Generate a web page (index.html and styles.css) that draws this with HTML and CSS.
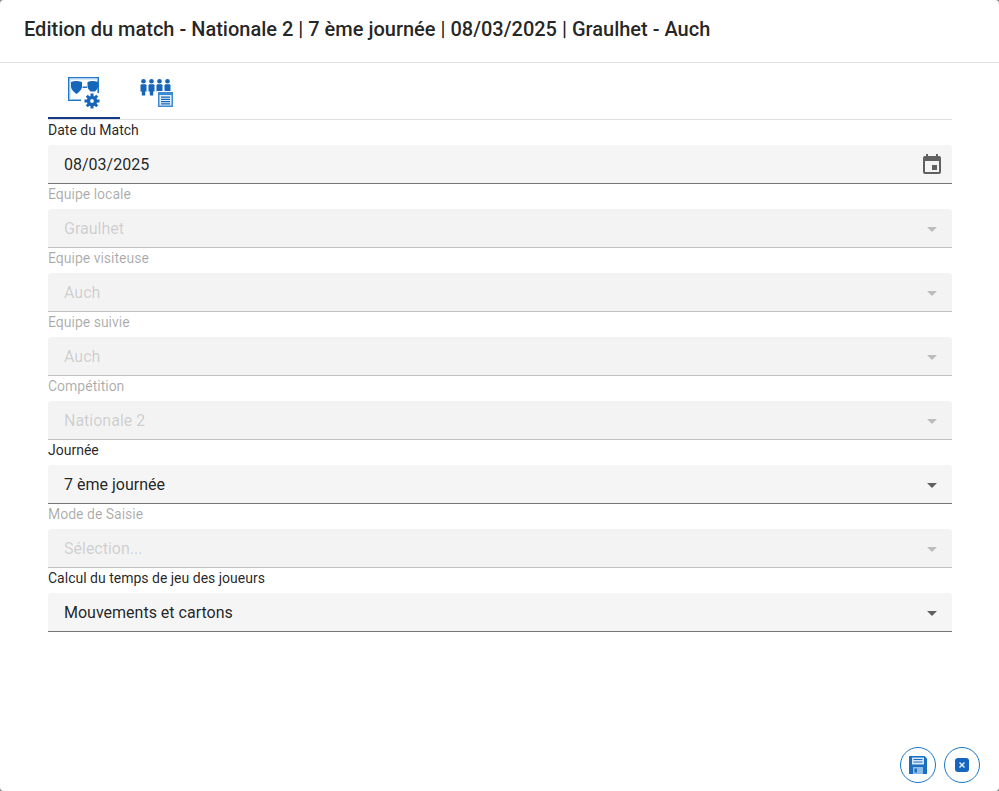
FILE: index.html
```html
<!DOCTYPE html>
<html lang="fr">
<head>
<meta charset="utf-8">
<title>Edition du match</title>
<link rel="stylesheet" href="styles.css">
</head>
<body>
<div class="dialog">
  <header class="title"><h1>Edition du match - Nationale 2 | 7 ème journée | 08/03/2025 | Graulhet - Auch</h1></header>
  <main class="content">
    <div class="tabs">
      <div class="tab active">
        <svg width="32" height="32" viewBox="0 0 32 32">
          <path fill="#1f78c8" d="M0 0h31v16h-1.600V1.600H1.600v20.800H13V24H0z"/>
          <path fill="#d5e6f6" d="M1.600 1.600h27.800v1.400H3v19.400H1.600z"/>
          <path fill="#1565b8" d="M3 5q5-2.200 11 0v5q-.5 3.500-5.500 7q-5-3.500-5.500-7zM19.500 5q5-2.200 10.500 0v5q-.5 2.500-3 4.500h-4.500q-2.500-2-3-4.500z"/>
          <rect x="14.500" y="9.500" width="4.500" height="1.500" fill="#1976c5"/>
          <g fill="#1565b8">
            <circle cx="24" cy="24" r="5.200"/>
            <path d="M22.500 16.500h3v3h-3zM22.500 28.500h3v3h-3zM16.500 22.500h3v3h-3zM28.500 22.500h3v3h-3z"/>
            <path d="M17.800 19.800l2-2 2.500 2.500-2 2zM25.700 27.700l2-2 2.500 2.500-2 2zM17.800 28.200l2.500-2.500 2 2-2.500 2.500zM25.700 20.300l2.500-2.500 2 2-2.500 2.500z"/>
          </g>
          <circle cx="24" cy="24" r="1.900" fill="#fff"/>
        </svg>
      </div>
      <div class="tab">
        <svg width="34" height="30" viewBox="0 0 34 30">
          <defs>
            <g id="p"><circle cx="3.500" cy="4.300" r="2.300"/><path d="M1.300 7.200h4.400l.8.800v6.500H5.200v4H1.800v-4H.5V8z"/></g>
          </defs>
          <g fill="#1565b8">
            <use href="#p" x="1"/><use href="#p" x="9"/><use href="#p" x="17"/><use href="#p" x="25"/>
          </g>
          <rect x="18" y="14" width="16" height="16" fill="#fff"/>
          <rect x="19" y="15" width="15" height="15" fill="#3b8ad2"/>
          <rect x="20.500" y="18" width="12" height="10.500" fill="#e3eef8"/>
          <path d="M22 19.500h9v1.300h-9zM22 21.800h9v1.300h-9zM22 24h9v1.300h-9zM22 26.200h9v1.200h-9z" fill="#1565b8"/>
        </svg>
      </div>
    </div>
    <div class="field">
      <label>Date du Match</label>
      <div class="box"><span>08/03/2025</span>
        <svg width="24" height="24" viewBox="0 0 24 24"><path fill="#616161" d="M19 4h-1V2h-2v2H8V2H6v2H5a2 2 0 0 0-2 2v14a2 2 0 0 0 2 2h14a2 2 0 0 0 2-2V6a2 2 0 0 0-2-2zm0 16H5V9h14zm-7-7h5v5h-5z"/></svg>
      </div>
    </div>
    <div class="field off"><label>Equipe locale</label><div class="box"><span>Graulhet</span><i class="arrow"></i></div></div>
    <div class="field off"><label>Equipe visiteuse</label><div class="box"><span>Auch</span><i class="arrow"></i></div></div>
    <div class="field off"><label>Equipe suivie</label><div class="box"><span>Auch</span><i class="arrow"></i></div></div>
    <div class="field off"><label>Compétition</label><div class="box"><span>Nationale 2</span><i class="arrow"></i></div></div>
    <div class="field"><label>Journée</label><div class="box"><span>7 ème journée</span><i class="arrow"></i></div></div>
    <div class="field off"><label>Mode de Saisie</label><div class="box"><span>Sélection...</span><i class="arrow"></i></div></div>
    <div class="field"><label>Calcul du temps de jeu des joueurs</label><div class="box"><span>Mouvements et cartons</span><i class="arrow"></i></div></div>
  </main>
  <footer class="actions">
    <button class="round" aria-label="Enregistrer">
      <svg width="20" height="20" viewBox="0 0 20 20">
        <path fill="#1a6fc0" d="M1 1h15.500L19 3.500V19H1z"/>
        <rect x="4" y="2.500" width="12" height="7" fill="#d6e6f6"/>
        <path fill="#1a6fc0" d="M5.500 4h9v1h-9zM5.500 6.500h9v1h-9z"/>
        <rect x="5" y="12" width="10" height="7" fill="#8fbce8"/>
        <rect x="6.500" y="13.500" width="2.500" height="4" fill="#1a6fc0"/>
      </svg>
    </button>
    <button class="round" aria-label="Fermer">
      <svg width="16" height="16" viewBox="0 0 16 16">
        <rect x="1" y="1" width="14" height="14" rx="3" fill="#1565c0"/>
        <path d="M5.500 5.500l5 5M10.500 5.500l-5 5" stroke="#dbe9f7" stroke-width="1.500"/>
      </svg>
    </button>
  </footer>
</div>
</body>
</html>
```
FILE: styles.css
```css
* { box-sizing: border-box; }
html, body { margin: 0; height: 100%; }
body { background: #8a8a8a; font-family: Roboto, "Liberation Sans", sans-serif; overflow: hidden; }
.dialog { width: 999px; height: 791px; background: #fff; border-radius: 4px; display: flex; flex-direction: column; }
.title { height: 63px; border-bottom: 1px solid #e0e0e0; padding: 0 24px; display: flex; align-items: center; flex: none; }
.title h1 { margin: 0 0 4px; font-size: 20px; font-weight: 500; line-height: 32px; color: rgba(0,0,0,.87); white-space: nowrap; }
.content { flex: 1; padding: 0 47px 0 48px; }
.tabs { display: flex; height: 57px; border-bottom: 1px solid #e0e0e0; }
.tab { width: 72px; height: 56px; display: flex; justify-content: center; align-items: flex-start; padding-top: 14px; }
.tab.active { border-bottom: 2px solid #163a8a; }
.field { height: 64px; display: flex; flex-direction: column; }
.field label { height: 25px; font-size: 14px; line-height: 21px; color: rgba(0,0,0,.87); }
.box { height: 39px; background: #f5f5f5; border-radius: 4px 4px 0 0; border-bottom: 1px solid #757575; padding: 0 8px 0 16px; display: flex; align-items: center; justify-content: space-between; font-size: 16px; color: rgba(0,0,0,.87); }
.arrow { width: 0; height: 0; border-left: 5px solid transparent; border-right: 5px solid transparent; border-top: 5px solid #616161; margin: 2px 7px 0 0; }
.off label { color: rgba(0,0,0,.34); }
.off .box { color: rgba(0,0,0,.17); border-bottom-color: #c2c2c2; background: #f3f3f3; }
.off .arrow { border-top-color: #bdbdbd; }
.actions { display: flex; justify-content: flex-end; gap: 8px; padding: 0 19px 8px 0; flex: none; }
.round { width: 36px; height: 36px; border-radius: 50%; background: #fff; border: 1px solid #1976c5; padding: 0; display: flex; align-items: center; justify-content: center; }
```
